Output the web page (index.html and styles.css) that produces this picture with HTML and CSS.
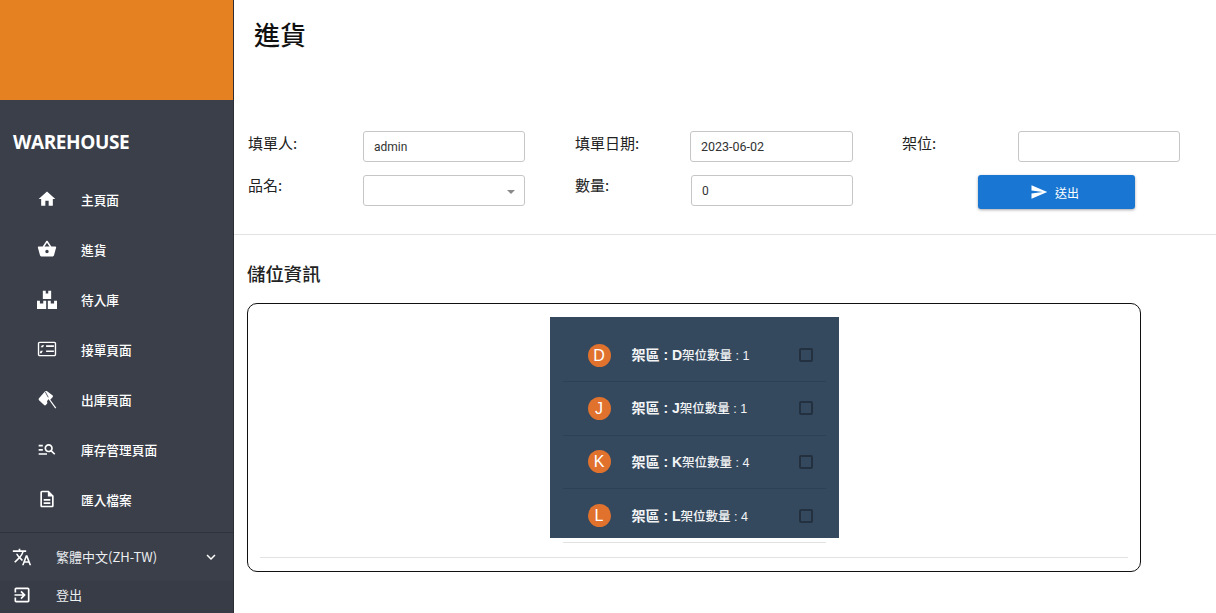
FILE: index.html
```html
<!DOCTYPE html>
<html lang="zh-Hant">
<head>
<meta charset="utf-8">
<title>進貨</title>
<link rel="stylesheet" href="styles.css">
</head>
<body>
<div class="app">
  <aside class="sidebar">
    <div class="brand-banner"></div>
    <div class="brand-name">WAREHOUSE</div>
    <nav class="nav">
      <a class="nav-item"><span class="nav-icon"><svg class="ic-20" viewBox="0 0 24 24"><path d="M10 20v-6h4v6h5v-8h3L12 3 2 12h3v8z"/></svg></span><span>主頁面</span></a>
      <a class="nav-item"><span class="nav-icon"><svg class="ic-20" viewBox="0 0 24 24"><path d="M17.21 9l-4.38-6.56c-.19-.28-.51-.42-.83-.42-.32 0-.64.14-.83.43L6.79 9H2c-.55 0-1 .45-1 1 0 .09.01.18.04.27l2.54 9.27c.23.84 1 1.46 1.92 1.46h13c.92 0 1.69-.62 1.93-1.46l2.54-9.27L23 10c0-.55-.45-1-1-1h-4.79zM9 9l3-4.4L15 9H9zm3 8c-1.1 0-2-.9-2-2s.9-2 2-2 2 .9 2 2-.9 2-2 2z"/></svg></span><span>進貨</span></a>
      <a class="nav-item"><span class="nav-icon"><svg class="ic-20" viewBox="0 0 24 24"><path d="M7 2h3.500v3.500h3V2H17v10H7zM0 14h3.500v3.500h4V14H11v10H0zM13 14h3.500v3.500h4V14H24v10H13z"/></svg></span><span>待入庫</span></a>
      <a class="nav-item"><span class="nav-icon"><svg class="ic-22" viewBox="0 0 24 24"><path fill-rule="evenodd" d="M20 4H4C2.900 4 2 4.900 2 6v12c0 1.100.9 2 2 2h16c1.100 0 2-.9 2-2V6c0-1.100-.9-2-2-2zm0 14.500H4c-.3 0-.5-.2-.5-.5V6c0-.3.2-.5.500-.5h16c.3 0 .5.2.5.5v12c0 .3-.2.5-.5.500z"/><path d="M11 8h8.500v1.800H11zM11 13.500h8.500v1.800H11zM6.500 8h2.500L7.500 10H5zM5 14h2.500L6 16.500H4z"/></svg></span><span>接單頁面</span></a>
      <a class="nav-item"><span class="nav-icon"><svg class="ic-20" viewBox="0 0 24 24"><path d="M2.400 11 9.500 3c.8-.8 1.800-.8 2.600-.3l6.400 4.800c.7.500.8 1.300.4 2l-3 3.500-2.200-.8-1.700 2.500.5 2.200-1.800 2.300c-.6.6-1.500.6-2.200.1l-5.800-5.500c-.8-.7-.9-1.900-.3-2.800z"/><path d="M14.500 12 22.500 23" fill="none" stroke="#fff" stroke-width="1.500"/><path d="M10 3.500 13.500 10" fill="none" stroke="#3a3f4a" stroke-width="1"/></svg></span><span>出庫頁面</span></a>
      <a class="nav-item"><span class="nav-icon"><svg class="ic-20" viewBox="0 0 24 24"><path d="M7 9H2V7h5v2zm0 3H2v2h5v-2zm13.590 7l-3.830-3.830c-.8.52-1.740.83-2.760.83-2.760 0-5-2.240-5-5s2.240-5 5-5 5 2.240 5 5c0 1.020-.31 1.960-.83 2.750L22 17.590 20.590 19zM17 11c0-1.650-1.350-3-3-3s-3 1.350-3 3 1.350 3 3 3 3-1.350 3-3zM2 19h10v-2H2v2z"/></svg></span><span>庫存管理頁面</span></a>
      <a class="nav-item"><span class="nav-icon"><svg class="ic-20" viewBox="0 0 24 24"><path d="M8 16h8v2H8zm0-4h8v2H8zm6-10H6c-1.100 0-2 .9-2 2v16c0 1.100.89 2 1.990 2H18c1.100 0 2-.9 2-2V8l-6-6zm4 18H6V4h7v5h5v11z"/></svg></span><span>匯入檔案</span></a>
    </nav>
    <div class="side-foot">
      <div class="lang-row">
        <svg class="ic-20 foot-icon" viewBox="0 0 24 24"><path d="M12.870 15.070l-2.540-2.510.03-.03c1.740-1.940 2.980-4.170 3.710-6.530H17V4h-7V2H8v2H1v1.990h11.170C11.500 7.920 10.440 9.750 9 11.350 8.070 10.320 7.300 9.190 6.690 8h-2c.73 1.630 1.730 3.170 2.980 4.560l-5.090 5.020L4 19l5-5 3.110 3.110.76-2.040zM18.500 10h-2L12 22h2l1.120-3h4.750L21 22h2l-4.500-12zm-2.620 7l1.620-4.330L19.120 17h-3.240z"/></svg>
        <span class="foot-label">繁體中文(ZH-TW)</span>
        <svg class="ic-18 chevron" viewBox="0 0 24 24"><path d="M16.590 8.590L12 13.170 7.410 8.590 6 10l6 6 6-6z"/></svg>
      </div>
      <div class="logout-row">
        <svg class="ic-20 foot-icon" viewBox="0 0 24 24"><path d="M10.090 15.590L11.500 17l5-5-5-5-1.410 1.410L12.670 11H3v2h9.670l-2.580 2.590zM19 3H5c-1.110 0-2 .9-2 2v4h2V5h14v14H5v-4H3v4c0 1.100.89 2 2 2h14c1.100 0 2-.9 2-2V5c0-1.100-.9-2-2-2z"/></svg>
        <span class="foot-label">登出</span>
      </div>
    </div>
  </aside>

  <main class="main">
    <h1 class="page-title">進貨</h1>
    <form class="entry-form">
      <label class="field-label col-a">填單人:</label>
      <div class="control col-a-input">admin</div>
      <label class="field-label col-b">填單日期:</label>
      <div class="control col-b-input date">2023-06-02</div>
      <label class="field-label col-c">架位:</label>
      <div class="control col-c-input"></div>
      <label class="field-label col-a row-two">品名:</label>
      <div class="control col-a-input select"><span class="caret"></span></div>
      <label class="field-label col-b row-two">數量:</label>
      <div class="control col-b-input qty">0</div>
      <button class="submit" type="button">
        <svg class="ic-18" viewBox="0 0 24 24"><path d="M2.010 21L23 12 2.010 3 2 10l15 2-15 2z"/></svg>
        <span>送出</span>
      </button>
    </form>
    <hr class="rule">
    <section class="storage">
      <h2 class="section-title">儲位資訊</h2>
      <div class="card">
        <div class="card-inner">
          <div class="rack-wrap">
            <ul class="rack-list">
              <li class="rack"><span class="avatar">D</span><span class="rack-text"><b>架區 : D</b>架位數量 : 1</span><span class="check"></span></li>
              <li class="rack"><span class="avatar">J</span><span class="rack-text"><b>架區 : J</b>架位數量 : 1</span><span class="check"></span></li>
              <li class="rack"><span class="avatar">K</span><span class="rack-text"><b>架區 : K</b>架位數量 : 4</span><span class="check"></span></li>
              <li class="rack"><span class="avatar">L</span><span class="rack-text"><b>架區 : L</b>架位數量 : 4</span><span class="check"></span></li>
            </ul>
          </div>
          <div class="list-end"></div>
        </div>
        <hr class="card-rule">
      </div>
    </section>
  </main>
</div>
</body>
</html>
```
FILE: styles.css
```css
* { box-sizing: border-box; }
html, body { margin: 0; height: 100%; }
body {
  font-family: "Noto Sans CJK TC", "Liberation Sans", sans-serif;
  background: #fff;
  color: #222;
  overflow: hidden;
}
.app { display: flex; height: 613px; }

/* sidebar */
.sidebar {
  width: 234px;
  flex: none;
  display: flex;
  flex-direction: column;
  background: #3a3f4a;
  border-right: 1px solid #2b2e35;
  color: #fff;
}
.sidebar svg { fill: #fff; display: block; }
.brand-banner { height: 100px; background: #e68121; }
.brand-name {
  font: 700 19px/24px "Open Sans", sans-serif;
  letter-spacing: -0.4px;
  padding: 30px 0 0 13px;
  height: 74px;
}
.nav { display: flex; flex-direction: column; }
.nav-item {
  height: 50px;
  display: flex;
  align-items: center;
  font-size: 12.700px;
  font-weight: 500;
}
.nav-icon {
  width: 81px;
  padding-left: 37px;
  flex: none;
  display: flex;
}
.ic-20 { width: 20px; height: 20px; }
.ic-22 { width: 22px; height: 22px; margin-left: -1px; }
.ic-18 { width: 18px; height: 18px; }
.side-foot {
  margin-top: 8px;
  flex: 1;
  display: flex;
  flex-direction: column;
  border-top: 1px solid #2f333c;
}
.lang-row {
  height: 48px;
  display: flex;
  align-items: center;
  padding-left: 12px;
}
.foot-icon { flex: none; }
.foot-label {
  margin-left: 24px;
  font-size: 13px;
  line-height: 18px;
  color: #eceef0;
}
.chevron { margin-left: auto; margin-right: 13px; }
.logout-row {
  flex: 1;
  display: flex;
  align-items: center;
  padding: 0 0 5px 12px;
  background: #383c47;
}

/* main */
.main { flex: 1; min-width: 0; }
.page-title {
  margin: 0;
  height: 131px;
  padding: 14px 0 0 20px;
  font-size: 26px;
  line-height: 40px;
  font-weight: 500;
  color: #111;
}
.entry-form {
  display: grid;
  grid-template-columns: 115px 162px 50px 115px 163px 49px 116px 162px;
  grid-template-rows: 31px 34px;
  row-gap: 13px;
  padding-left: 14px;
}
.field-label {
  font-size: 15px;
  line-height: 24px;
  font-weight: 400;
  color: #222;
}
.field-label.row-two { margin-top: -2px; }
.col-a { grid-column: 1; }
.col-a-input { grid-column: 2; }
.col-b { grid-column: 4; }
.col-b-input { grid-column: 5; }
.col-c { grid-column: 7; }
.col-c-input { grid-column: 8; }
.control {
  height: 31px;
  border: 1px solid #c6c6c6;
  border-radius: 3px;
  padding-left: 10px;
  font: 12px/30px Roboto, sans-serif;
  color: #333;
  background: #fff;
  position: relative;
}
.control.date { font-size: 12.500px; }
.control.qty { margin-left: 1px; }
.caret {
  position: absolute;
  right: 9px;
  top: 14px;
  border-left: 4px solid transparent;
  border-right: 4px solid transparent;
  border-top: 4px solid #8a8a8a;
}
.submit {
  grid-column: 7 / span 2;
  justify-self: start;
  margin-left: 76px;
  width: 157px;
  height: 34px;
  border: 0;
  border-radius: 3px;
  background: #1976d2;
  color: #fff;
  fill: #fff;
  box-shadow: 0 1px 3px rgba(0, 0, 0, .35);
  display: flex;
  align-items: center;
  justify-content: center;
  gap: 7px;
  font: 400 12px "Noto Sans CJK TC", sans-serif;
  padding: 0 4px 0 0;
}
.submit svg { display: block; }
.rule {
  margin: 25px 0 0;
  border: 0;
  border-top: 1px solid #e2e2e2;
}
.storage { padding: 0 0 0 13px; }
.section-title {
  margin: 0;
  height: 68px;
  padding-top: 26px;
  font-size: 18.400px;
  line-height: 25px;
  font-weight: 500;
  color: #222;
}
.card {
  width: 894px;
  height: 269px;
  border: 1px solid #111;
  border-radius: 10px;
  padding: 13px 12px 0;
  background: #fff;
}
.card-inner { display: flex; flex-direction: column; align-items: center; }
.rack-wrap {
  width: 289px;
  height: 221px;
  background: #35495e;
  overflow: hidden;
  padding: 0 13px;
}
.rack-list { list-style: none; margin: 0; padding: 12px 0 0; }
.rack {
  height: 53.300px;
  display: flex;
  align-items: center;
  padding-left: 25px;
  border-bottom: 1px solid #2e4053;
  color: #f2f4f5;
  font-size: 12.500px;
}
.rack:last-child { border-bottom: 0; }
.avatar {
  width: 23px;
  height: 23px;
  flex: none;
  border-radius: 50%;
  background: #e0722e;
  color: #fff;
  font: 16px/23px "Liberation Sans", sans-serif;
  text-align: center;
}
.rack-text {
  margin: 0 0 2px 21px;
  flex: 1;
  font-family: "Liberation Sans", "Noto Sans CJK TC", sans-serif;
  font-weight: 500;
}
.rack-text b { font-size: 14px; font-weight: 700; }
.check {
  width: 14px;
  height: 14px;
  flex: none;
  border: 2px solid #22303f;
  border-radius: 2px;
  margin-right: 13px;
}
.list-end { width: 263px; height: 1px; margin-top: 4px; background: #e2e2e2; }
.card-rule {
  margin: 14px 0 0;
  border: 0;
  border-top: 1px solid #e2e2e2;
}
```
